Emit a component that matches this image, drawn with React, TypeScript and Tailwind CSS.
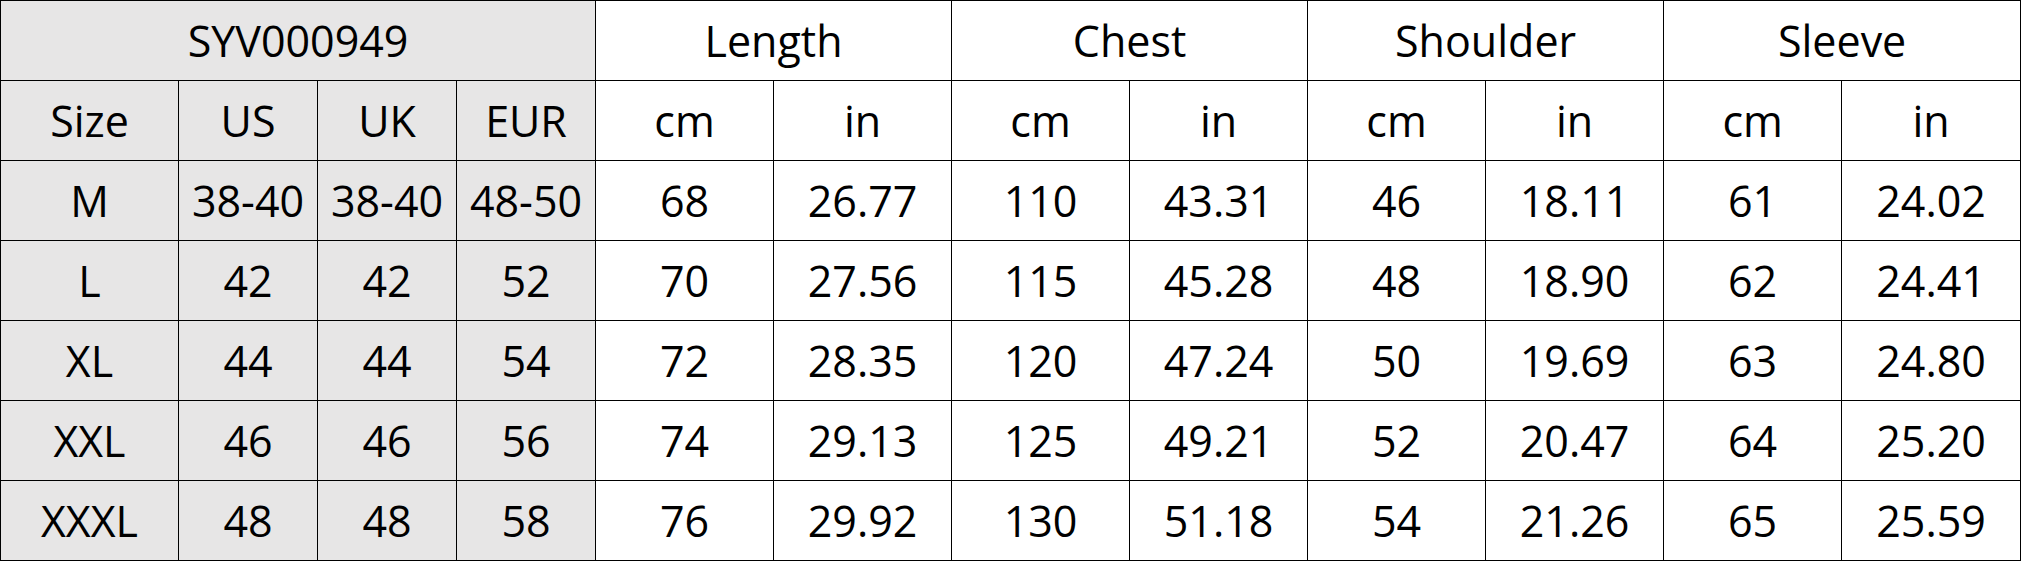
import React from 'react';

const rows = [
  ['M', '38-40', '38-40', '48-50', '68', '26.77', '110', '43.31', '46', '18.11', '61', '24.02'],
  ['L', '42', '42', '52', '70', '27.56', '115', '45.28', '48', '18.90', '62', '24.41'],
  ['XL', '44', '44', '54', '72', '28.35', '120', '47.24', '50', '19.69', '63', '24.80'],
  ['XXL', '46', '46', '56', '74', '29.13', '125', '49.21', '52', '20.47', '64', '25.20'],
  ['XXXL', '48', '48', '58', '76', '29.92', '130', '51.18', '54', '21.26', '65', '25.59'],
];

const widths = [178, 139, 139, 139, 178, 178, 178, 178, 178, 178, 178, 179];
const measures = ['Length', 'Chest', 'Shoulder', 'Sleeve'];

const cell = 'border border-black text-center align-middle p-0 leading-none';
const gray = 'bg-[#e7e6e6]';

const App = () => {
  return (
    <div className="w-[2021px] h-[562px] bg-white text-black font-['Open_Sans','Noto_Sans',sans-serif] text-[43px]">
      <table className="table-fixed border-collapse w-[2021px]">
        <colgroup>
          {widths.map((w, i) => (
            <col key={i} style={{ width: w }} />
          ))}
        </colgroup>
        <tbody>
          <tr className="h-[80px]">
            <td colSpan={4} className={`${cell} ${gray}`}>SYV000949</td>
            {measures.map((m) => (
              <td key={m} colSpan={2} className={cell}>{m}</td>
            ))}
          </tr>
          <tr className="h-[80px]">
            {['Size', 'US', 'UK', 'EUR'].map((h) => (
              <td key={h} className={`${cell} ${gray}`}>{h}</td>
            ))}
            {measures.map((m) => (
              <React.Fragment key={m}>
                <td className={cell}>cm</td>
                <td className={cell}>in</td>
              </React.Fragment>
            ))}
          </tr>
          {rows.map((r) => (
            <tr key={r[0]} className="h-[80px]">
              {r.map((v, i) => (
                <td key={i} className={`${cell} ${i < 4 ? gray : ''}`}>{v}</td>
              ))}
            </tr>
          ))}
        </tbody>
      </table>
    </div>
  );
};

export default App;
